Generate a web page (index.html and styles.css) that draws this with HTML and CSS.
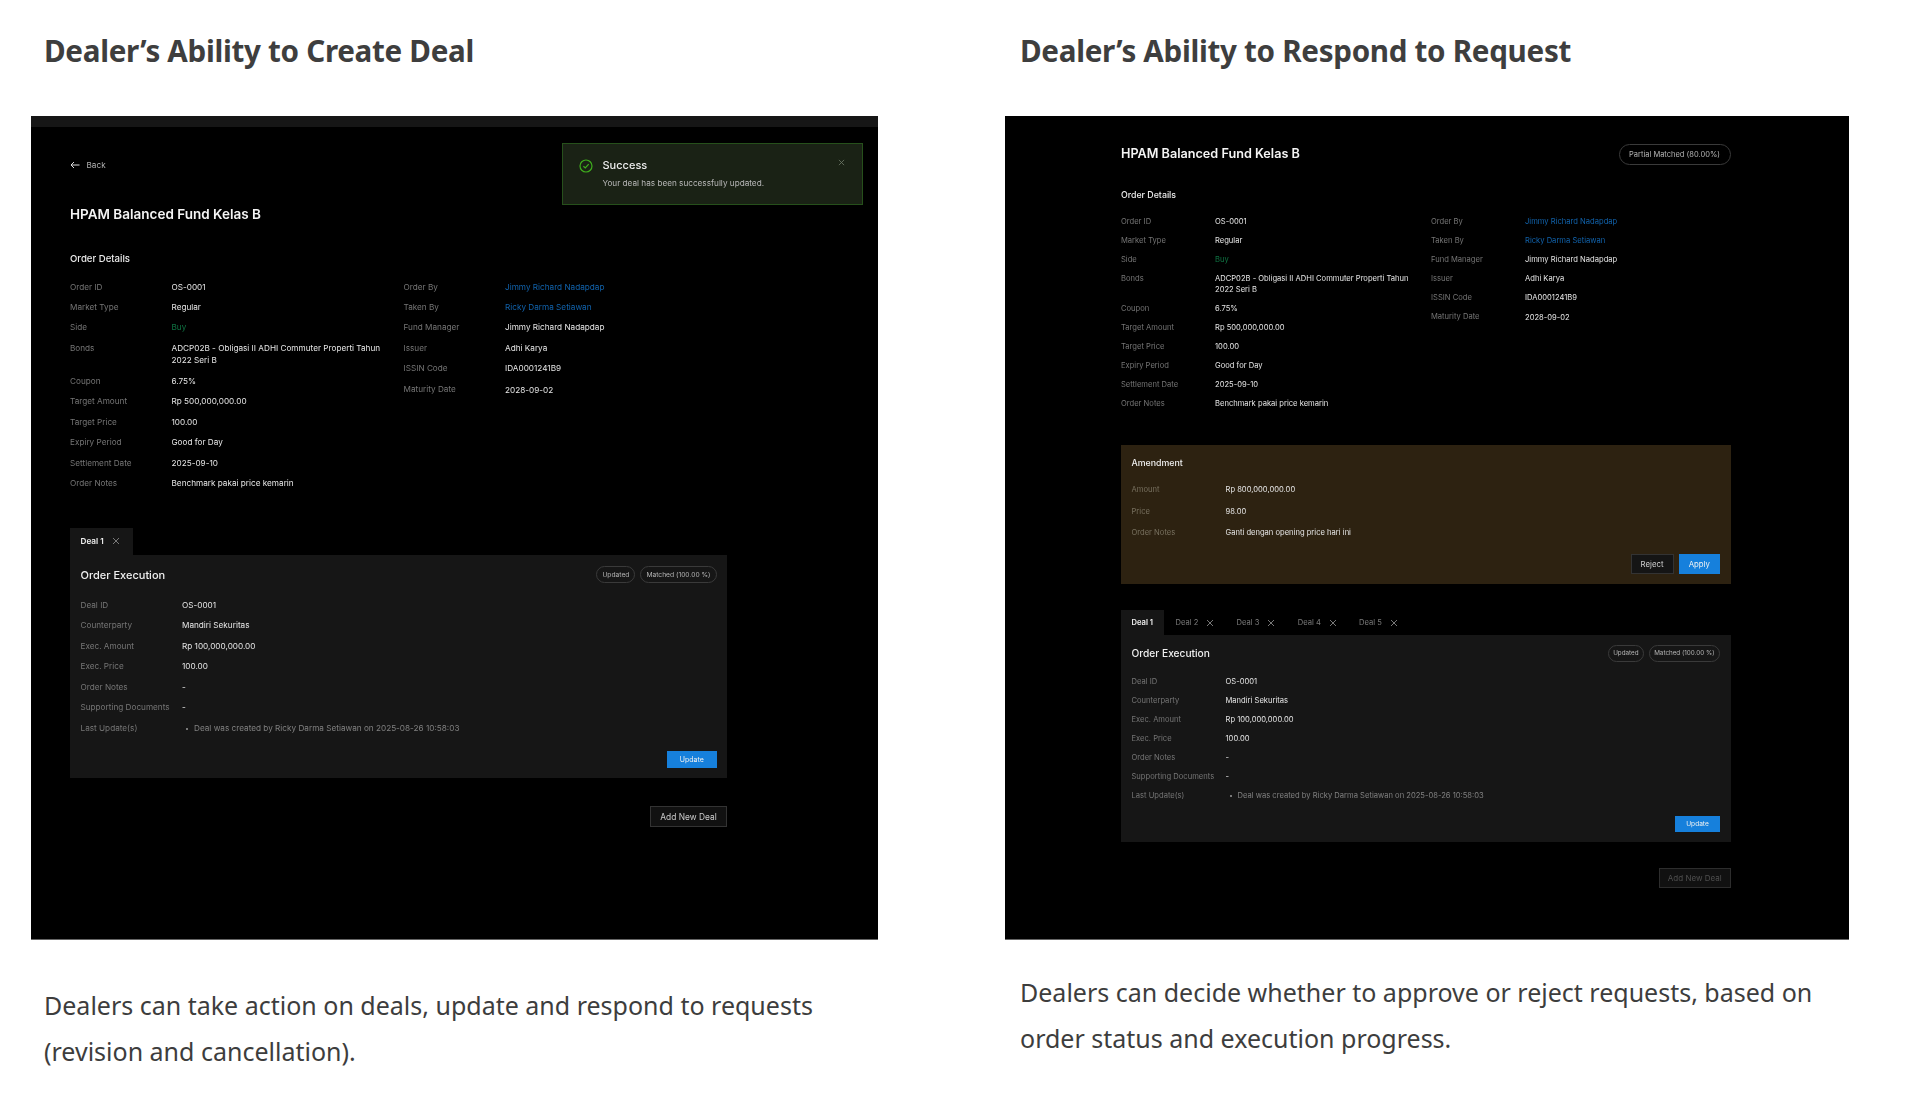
FILE: index.html
```html
<!DOCTYPE html>
<html lang="en">
<head>
<meta charset="utf-8">
<title>Dealer's Ability</title>
<link rel="stylesheet" href="styles.css">
</head>
<body>
<main class="page">
  <section class="col col-left">
    <h2 class="heading">Dealer’s Ability to Create Deal</h2>
    <div class="screen screen-left">
      <div class="topbar"></div>
      <div class="screen-body">
        <div class="back"><svg class="back-icon" viewBox="0 0 10 8"><path d="M9.5 4H1M4 1 1 4l3 3"/></svg><span>Back</span></div>
        <h3 class="title">HPAM Balanced Fund Kelas B</h3>
        <h4 class="section-title">Order Details</h4>
        <div class="details">
          <dl class="rows rows-main">
            <dt>Order ID</dt><dd>OS-0001</dd>
            <dt>Market Type</dt><dd>Regular</dd>
            <dt>Side</dt><dd class="buy">Buy</dd>
            <dt>Bonds</dt><dd>ADCP02B - Obligasi II ADHI Commuter Properti Tahun 2022 Seri B</dd>
            <dt>Coupon</dt><dd>6.75%</dd>
            <dt>Target Amount</dt><dd>Rp 500,000,000.00</dd>
            <dt>Target Price</dt><dd>100.00</dd>
            <dt>Expiry Period</dt><dd>Good for Day</dd>
            <dt>Settlement Date</dt><dd>2025-09-10</dd>
            <dt>Order Notes</dt><dd>Benchmark pakai price kemarin</dd>
          </dl>
          <dl class="rows">
            <dt>Order By</dt><dd class="link">Jimmy Richard Nadapdap</dd>
            <dt>Taken By</dt><dd class="link">Ricky Darma Setiawan</dd>
            <dt>Fund Manager</dt><dd>Jimmy Richard Nadapdap</dd>
            <dt>Issuer</dt><dd>Adhi Karya</dd>
            <dt>ISSIN Code</dt><dd>IDA0001241B9</dd>
            <dt>Maturity Date</dt><dd class="maturity">2028-09-02</dd>
          </dl>
        </div>
        <div class="tabs">
          <div class="tab tab-active tab-closable">Deal 1<svg class="x" viewBox="0 0 8 8"><path d="M1 1l6 6M7 1 1 7"/></svg></div>
        </div>
        <div class="panel">
          <div class="panel-head">
            <h4 class="panel-title">Order Execution</h4>
            <div class="badges"><span class="badge">Updated</span><span class="badge">Matched (100.00 %)</span></div>
          </div>
          <dl class="rows rows-deal">
            <dt>Deal ID</dt><dd>OS-0001</dd>
            <dt>Counterparty</dt><dd>Mandiri Sekuritas</dd>
            <dt>Exec. Amount</dt><dd>Rp 100,000,000.00</dd>
            <dt>Exec. Price</dt><dd>100.00</dd>
            <dt>Order Notes</dt><dd>-</dd>
            <dt>Supporting Documents</dt><dd>-</dd>
            <dt>Last Update(s)</dt><dd class="log">Deal was created by Ricky Darma Setiawan on 2025-08-26 10:58:03</dd>
          </dl>
          <div class="actions"><button class="btn btn-primary btn-update">Update</button></div>
        </div>
        <div class="add-row"><button class="btn btn-add">Add New Deal</button></div>
      </div>
      <div class="toast">
        <svg class="toast-icon" viewBox="0 0 14 14"><circle cx="7" cy="7" r="6"/><path d="M4.4 7.2 6.3 9l3.4-3.9"/></svg>
        <div class="toast-text">
          <div class="toast-title">Success</div>
          <div class="toast-msg">Your deal has been successfully updated.</div>
        </div>
        <svg class="x toast-close" viewBox="0 0 8 8"><path d="M1 1l6 6M7 1 1 7"/></svg>
      </div>
    </div>
    <p class="caption caption-left">Dealers can take action on deals, update and respond to requests (revision and cancellation).</p>
  </section>

  <section class="col col-right">
    <h2 class="heading">Dealer’s Ability to Respond to Request</h2>
    <div class="screen screen-right">
      <div class="screen-body">
        <div class="title-row">
          <h3 class="title">HPAM Balanced Fund Kelas B</h3>
          <span class="badge badge-lg">Partial Matched (80.00%)</span>
        </div>
        <h4 class="section-title">Order Details</h4>
        <div class="details">
          <dl class="rows rows-main">
            <dt>Order ID</dt><dd>OS-0001</dd>
            <dt>Market Type</dt><dd>Regular</dd>
            <dt>Side</dt><dd class="buy">Buy</dd>
            <dt>Bonds</dt><dd>ADCP02B - Obligasi II ADHI Commuter Properti Tahun 2022 Seri B</dd>
            <dt>Coupon</dt><dd>6.75%</dd>
            <dt>Target Amount</dt><dd>Rp 500,000,000.00</dd>
            <dt>Target Price</dt><dd>100.00</dd>
            <dt>Expiry Period</dt><dd>Good for Day</dd>
            <dt>Settlement Date</dt><dd>2025-09-10</dd>
            <dt>Order Notes</dt><dd>Benchmark pakai price kemarin</dd>
          </dl>
          <dl class="rows">
            <dt>Order By</dt><dd class="link">Jimmy Richard Nadapdap</dd>
            <dt>Taken By</dt><dd class="link">Ricky Darma Setiawan</dd>
            <dt>Fund Manager</dt><dd>Jimmy Richard Nadapdap</dd>
            <dt>Issuer</dt><dd>Adhi Karya</dd>
            <dt>ISSIN Code</dt><dd>IDA0001241B9</dd>
            <dt>Maturity Date</dt><dd class="maturity">2028-09-02</dd>
          </dl>
        </div>
        <div class="amendment">
          <h4 class="amend-title">Amendment</h4>
          <dl class="rows rows-amend">
            <dt>Amount</dt><dd>Rp 800,000,000.00</dd>
            <dt>Price</dt><dd>98.00</dd>
            <dt>Order Notes</dt><dd>Ganti dengan opening price hari ini</dd>
          </dl>
          <div class="actions actions-amend">
            <button class="btn btn-dark">Reject</button>
            <button class="btn btn-primary btn-apply">Apply</button>
          </div>
        </div>
        <div class="tabs">
          <div class="tab tab-active">Deal 1</div>
          <div class="tab">Deal 2<svg class="x" viewBox="0 0 8 8"><path d="M1 1l6 6M7 1 1 7"/></svg></div>
          <div class="tab">Deal 3<svg class="x" viewBox="0 0 8 8"><path d="M1 1l6 6M7 1 1 7"/></svg></div>
          <div class="tab">Deal 4<svg class="x" viewBox="0 0 8 8"><path d="M1 1l6 6M7 1 1 7"/></svg></div>
          <div class="tab">Deal 5<svg class="x" viewBox="0 0 8 8"><path d="M1 1l6 6M7 1 1 7"/></svg></div>
        </div>
        <div class="panel">
          <div class="panel-head">
            <h4 class="panel-title">Order Execution</h4>
            <div class="badges"><span class="badge">Updated</span><span class="badge">Matched (100.00 %)</span></div>
          </div>
          <dl class="rows rows-deal">
            <dt>Deal ID</dt><dd>OS-0001</dd>
            <dt>Counterparty</dt><dd>Mandiri Sekuritas</dd>
            <dt>Exec. Amount</dt><dd>Rp 100,000,000.00</dd>
            <dt>Exec. Price</dt><dd>100.00</dd>
            <dt>Order Notes</dt><dd>-</dd>
            <dt>Supporting Documents</dt><dd>-</dd>
            <dt>Last Update(s)</dt><dd class="log">Deal was created by Ricky Darma Setiawan on 2025-08-26 10:58:03</dd>
          </dl>
          <div class="actions"><button class="btn btn-primary btn-update">Update</button></div>
        </div>
        <div class="add-row"><button class="btn btn-add btn-disabled">Add New Deal</button></div>
      </div>
    </div>
    <p class="caption caption-right">Dealers can decide whether to approve or reject requests, based on order status and execution progress.</p>
  </section>
</main>
</body>
</html>
```

FILE: styles.css
```css
* { box-sizing: border-box; }
html, body { margin: 0; background: #fff; }
body { width: 1920px; height: 1098px; overflow: hidden; }
h2, h3, h4, p, dl, dd { margin: 0; }

.page { display: flex; padding-left: 31px; gap: 127px; font-family: Inter, "Liberation Sans", sans-serif; }
.col-left { width: 847px; }
.col-right { width: 844px; }

.heading {
  height: 116px; padding: 33px 0 0 13px;
  font: 700 29.6px/36px "Noto Sans", sans-serif; color: #3e3e3e; letter-spacing: -0.3px;
}
.col-right .heading { padding-left: 15px; }
.caption { font: 400 25px/46px "Noto Sans", sans-serif; color: #3d3d3d; padding-left: 13px; }
.caption-left { margin-top: 42px; padding-right: 20px; }
.caption-right { margin-top: 29px; padding-left: 15px; padding-right: 20px; }

.screen { position: relative; height: 824px; background: #000; color: #e8e8e8; border-bottom: 1px solid #666; filter: blur(0.35px); }
.topbar { height: 11px; background: #161616; }

.screen-left { --fs: 8.2px; --lh: 12.3px; --gap: 8.2px; --lw: 101.5px; }
.screen-right { --fs: 7.6px; --lh: 11.1px; --gap: 7.9px; --lw: 94px; }

.screen-left .screen-body { padding: 32px 151px 0 39px; }
.screen-right .screen-body { padding: 28px 118.5px 0 116px; }

.back { display: flex; align-items: center; gap: 6.5px; height: 12px; font-size: 8.2px; color: #b0b0b0; }
.back-icon { width: 10px; height: 8px; fill: none; stroke: #ddd; stroke-width: 1; }

.title { font-weight: 600; color: #f4f4f4; }
.screen-left .title { margin-top: 34px; font-size: 13.5px; line-height: 18px; }
.screen-right .title { font-size: 12.65px; line-height: 20px; }
.title-row { display: flex; justify-content: space-between; align-items: center; }

.section-title { font-weight: 500; color: #ececec; }
.screen-left .section-title { margin-top: 30px; font-size: 9.6px; line-height: 12px; }
.screen-right .section-title { margin-top: 24.5px; font-size: 8.8px; line-height: 12px; }

.details { display: flex; }
.screen-left .details { margin-top: 15.5px; }
.screen-right .details { margin-top: 15px; }
.screen-left .rows-main { width: 333.5px; }
.screen-right .rows-main { width: 310px; }

.rows { display: grid; grid-template-columns: var(--lw) 1fr; row-gap: var(--gap); align-content: start; font-size: var(--fs); line-height: var(--lh); }
.rows dt { color: #757575; white-space: nowrap; }
.rows dd { color: #e6e6e6; }
.rows-main dd { padding-right: 12px; }
.screen-right .rows-main dd { padding-right: 6px; }
.rows dd.buy { color: #0f7443; }
.rows dd.link { color: #1163ad; }
.rows dd.maturity { padding-top: 1px; }
.rows dd.log { color: #808080; padding-left: 12px; }
.log::before {
  content: ""; display: inline-block; width: 2px; height: 2px; border-radius: 50%;
  background: #9a9a9a; margin: 0 6px 0 -8px; vertical-align: middle;
}

.tabs { display: flex; color: #7a7a7a; }
.screen-left .tabs { margin-top: 38.5px; height: 27px; font-size: 8.2px; }
.screen-right .tabs { margin-top: 26px; height: 25px; font-size: 7.6px; }
.tab { display: flex; align-items: center; gap: 8px; padding: 0 10.7px 0 11.5px; }
.tab-active { background: #161616; color: #f0f0f0; font-weight: 600; padding: 0 10.5px; }
.screen-left .tab-active { width: 63px; }
.screen-right .tab-active { width: 43px; }
.x { width: 8px; height: 8px; fill: none; stroke: #858585; stroke-width: 0.9; }

.panel { background: #161616; }
.screen-left .panel { padding: 11.5px 10.5px 10px; height: 223px; }
.screen-right .panel { padding: 10px 10.5px 9.5px; height: 207px; }
.panel-head { display: flex; justify-content: space-between; align-items: center; }
.panel-title { font-weight: 500; color: #f0f0f0; }
.screen-left .panel-title { font-size: 11px; }
.screen-right .panel-title { font-size: 10.2px; }
.screen-left .rows-deal { margin-top: 15.9px; }
.screen-right .rows-deal { margin-top: 14.4px; }
.badges { display: flex; gap: 5px; }
.badge {
  display: flex; align-items: center; border: 1px solid #3a3a3a; border-radius: 10px;
  padding: 0 5px; height: 16.5px; font-size: 6.7px; color: #b5b5b5; white-space: nowrap;
}
.screen-right .badge { font-size: 6.3px; padding: 0 4.5px; }
.screen-right .badges { gap: 4.5px; }
.screen .badge-lg { height: 20.5px; padding: 0 9.5px; font-size: 7.5px; border-radius: 11px; }

.actions { display: flex; justify-content: flex-end; gap: 5px; }
.screen-left .panel .actions { margin-top: 16.8px; }
.screen-right .panel .actions { margin-top: 15.4px; }
.btn { font-family: inherit; border: 0; padding: 0; color: #eee; }
.btn-primary { background: #1680dc; color: #f2f2f2; }
.btn-update { font-size: 7px; }
.screen-left .btn-update { width: 49.5px; height: 17px; }
.screen-right .btn-update { width: 45px; height: 15.5px; font-size: 6.6px; }

.add-row { display: flex; justify-content: flex-end; }
.btn-add { background: #111; border: 1px solid #333; }
.screen-left .add-row { margin-top: 28px; }
.screen-left .btn-add { width: 77px; height: 21.5px; font-size: 8.4px; color: #ccc; }
.screen-right .add-row { margin-top: 26px; }
.screen-right .btn-add { width: 71.5px; height: 20px; font-size: 8px; }
.btn-disabled { color: #4f4f4f; border-color: #2d2d2d; background: #111; }

.amendment { margin-top: 36px; height: 139px; background: #2d2211; padding: 11.5px 10.5px 0; }
.amend-title { font-size: 8.8px; line-height: 12px; font-weight: 500; color: #efefef; }
.rows-amend { margin-top: 15.4px; row-gap: 10.5px; }
.rows-amend dt { color: #77705f; }
.actions-amend { margin-top: 15.5px; }
.btn-dark { width: 43px; height: 20.5px; background: #151515; border: 1px solid #333; font-size: 7.8px; color: #cfcfcf; }
.btn-apply { width: 41.5px; height: 20.5px; font-size: 7.8px; }

.toast {
  position: absolute; left: 531px; top: 27px; width: 301px; height: 61.5px;
  display: flex; align-items: flex-start; background: #1a2215; border: 1px solid #26501b;
  padding: 14.5px 0 0 16px;
}
.toast-icon { width: 14px; height: 14px; margin-right: 9.5px; fill: none; stroke: #3fae1d; stroke-width: 1.2; }
.toast-title { font-size: 11px; line-height: 13px; font-weight: 500; color: #ececec; }
.toast-msg { margin-top: 5.5px; font-size: 8.2px; line-height: 12px; color: #b8b8b8; }
.toast-close { position: absolute; top: 14.5px; right: 17px; width: 7px; height: 7px; stroke: #6f7a68; }
```
